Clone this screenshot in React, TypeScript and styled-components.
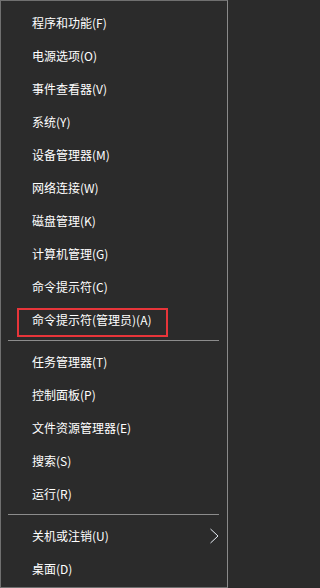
import React from 'react'
import styled, { createGlobalStyle } from 'styled-components'

const GlobalStyle = createGlobalStyle`
  html, body {
    margin: 0;
    padding: 0;
    background: #2b2b2b;
  }
  * {
    box-sizing: border-box;
  }
`

const Menu = styled.div`
  width: 228px;
  height: 588px;
  display: flex;
  flex-direction: column;
  padding: 5px 0 2px;
  background: #2b2b2b;
  border: 1px solid #707070;
  border-right-color: #8a8a8a;
  font-family: 'Noto Sans CJK SC', 'Microsoft YaHei', sans-serif;
  font-size: 12px;
  color: #ffffff;
`

const Item = styled.div<{ $highlight?: boolean }>`
  position: relative;
  height: 33px;
  display: flex;
  align-items: center;
  padding-left: 31px;
  padding-right: 8px;
  line-height: 1;
  white-space: nowrap;
`

const Highlight = styled.span`
  position: absolute;
  left: 16px;
  top: 5px;
  width: 151px;
  height: 29px;
  border: 2px solid #e8353a;
`

const Label = styled.span`
  flex: 1;
`

const Separator = styled.div`
  height: 1px;
  margin: 4px 8px 4px 7px;
  background: #8c8c8c;
`

const Chevron = () => (
  <svg width="10" height="16" viewBox="0 0 10 16">
    <polyline
      points="1.5,1 9,8 1.5,15"
      fill="none"
      stroke="#e8eef6"
      strokeWidth="1"
    />
  </svg>
)

const groups: string[][] = [
  [
    '程序和功能(F)',
    '电源选项(O)',
    '事件查看器(V)',
    '系统(Y)',
    '设备管理器(M)',
    '网络连接(W)',
    '磁盘管理(K)',
    '计算机管理(G)',
    '命令提示符(C)',
    '命令提示符(管理员)(A)',
  ],
  ['任务管理器(T)', '控制面板(P)', '文件资源管理器(E)', '搜索(S)', '运行(R)'],
  ['关机或注销(U)', '桌面(D)'],
]

const App = () => {
  return (
    <>
      <GlobalStyle />
      <Menu>
        {groups.map((group, gi) => (
          <React.Fragment key={gi}>
            {gi > 0 && <Separator />}
            {group.map((label) => (
              <Item key={label}>
                {label === '命令提示符(管理员)(A)' && <Highlight />}
                <Label>{label}</Label>
                {label === '关机或注销(U)' && <Chevron />}
              </Item>
            ))}
          </React.Fragment>
        ))}
      </Menu>
    </>
  )
}

export default App
